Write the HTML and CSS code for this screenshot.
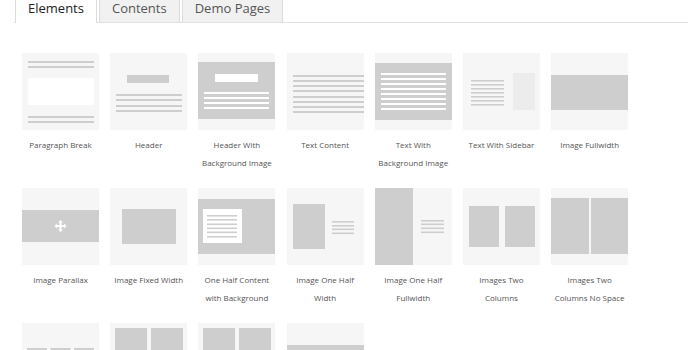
FILE: index.html
```html
<!DOCTYPE html>
<html>
	<head>
		<meta charset="UTF-8">
		<title>Elements</title>
		<link rel="stylesheet" href="styles.css">
	</head>
	<body>
		<div class="tabs">
			<a class="tab active">Elements</a>
			<a class="tab">Contents</a>
			<a class="tab">Demo Pages</a>
		</div>
		<ul class="grid">
			<li>
				<svg class="thumb" viewBox="0 0 77 77">
					<rect class="g" x="6" y="8" width="66" height="2"/>
					<rect class="g" x="6" y="13" width="66" height="2"/>
					<rect class="w" x="6" y="25" width="66" height="27"/>
					<rect class="g" x="6" y="63" width="66" height="2"/>
					<rect class="g" x="6" y="68" width="66" height="2"/>
				</svg>
				<p>Paragraph Break</p>
			</li>
			<li>
				<svg class="thumb" viewBox="0 0 77 77">
					<rect class="g" x="17" y="22" width="42" height="8"/>
					<rect class="g" x="6" y="41" width="66" height="2"/>
					<rect class="g" x="6" y="46" width="66" height="2"/>
					<rect class="g" x="6" y="52" width="66" height="2"/>
					<rect class="g" x="6" y="57" width="66" height="2"/>
				</svg>
				<p>Header</p>
			</li>
			<li>
				<svg class="thumb" viewBox="0 0 77 77">
					<rect class="g" x="0" y="9" width="77" height="57"/>
					<rect class="w" x="17" y="21" width="43" height="8"/>
					<rect class="w" x="6" y="39" width="65" height="2"/>
					<rect class="w" x="6" y="44" width="65" height="2"/>
					<rect class="w" x="6" y="49" width="65" height="2"/>
					<rect class="w" x="6" y="54" width="65" height="2"/>
				</svg>
				<p>Header With Background Image</p>
			</li>
			<li>
				<svg class="thumb" viewBox="0 0 77 77">
					<rect class="g" x="6" y="22" width="71" height="2"/>
					<rect class="g" x="6" y="27" width="71" height="2"/>
					<rect class="g" x="6" y="32" width="71" height="2"/>
					<rect class="g" x="6" y="37" width="71" height="2"/>
					<rect class="g" x="6" y="43" width="71" height="2"/>
					<rect class="g" x="6" y="48" width="71" height="2"/>
					<rect class="g" x="6" y="53" width="71" height="2"/>
					<rect class="g" x="6" y="58" width="71" height="2"/>
				</svg>
				<p>Text Content</p>
			</li>
			<li>
				<svg class="thumb" viewBox="0 0 77 77">
					<rect class="g" x="0" y="10" width="77" height="57"/>
					<rect class="w" x="6" y="20" width="65" height="2"/>
					<rect class="w" x="6" y="25" width="65" height="2"/>
					<rect class="w" x="6" y="30" width="65" height="2"/>
					<rect class="w" x="6" y="35" width="65" height="2"/>
					<rect class="w" x="6" y="40" width="65" height="2"/>
					<rect class="w" x="6" y="45" width="65" height="2"/>
					<rect class="w" x="6" y="50" width="65" height="2"/>
					<rect class="w" x="6" y="55" width="65" height="2"/>
				</svg>
				<p>Text With Background Image</p>
			</li>
			<li>
				<svg class="thumb" viewBox="0 0 77 77">
					<rect class="g" x="8" y="27" width="33" height="1.6"/>
					<rect class="g" x="8" y="31" width="33" height="1.6"/>
					<rect class="g" x="8" y="35" width="33" height="1.6"/>
					<rect class="g" x="8" y="39" width="33" height="1.6"/>
					<rect class="g" x="8" y="43" width="33" height="1.6"/>
					<rect class="g" x="8" y="47" width="33" height="1.6"/>
					<rect class="g" x="8" y="51" width="33" height="1.6"/>
					<rect class="s" x="50" y="20" width="22" height="37"/>
				</svg>
				<p>Text With Sidebar</p>
			</li>
			<li>
				<svg class="thumb" viewBox="0 0 77 77">
					<rect class="g" x="0" y="22" width="77" height="35"/>
				</svg>
				<p>Image Fullwidth</p>
			</li>

			<li>
				<svg class="thumb" viewBox="0 0 77 77">
					<rect class="g" x="0" y="22" width="77" height="32"/>
					<path class="w" d="M38.5 32 L41 34.5 H39.5 V37 H42 V35.5 L44.5 38 L42 40.5 V39 H39.5 V41.5 H41 L38.5 44 L36 41.5 H37.5 V39 H35 V40.5 L32.5 38 L35 35.5 V37 H37.5 V34.5 H36 Z"/>
				</svg>
				<p>Image Parallax</p>
			</li>
			<li>
				<svg class="thumb" viewBox="0 0 77 77">
					<rect class="g" x="12" y="21" width="54" height="35"/>
				</svg>
				<p>Image Fixed Width</p>
			</li>
			<li>
				<svg class="thumb" viewBox="0 0 77 77">
					<rect class="g" x="0" y="11" width="77" height="55"/>
					<rect class="w" x="5" y="21" width="39" height="34"/>
					<rect class="g" x="9" y="27" width="30" height="1.6"/>
					<rect class="g" x="9" y="31" width="30" height="1.6"/>
					<rect class="g" x="9" y="35.5" width="30" height="1.6"/>
					<rect class="g" x="9" y="39.5" width="30" height="1.6"/>
					<rect class="g" x="9" y="43.5" width="30" height="1.6"/>
					<rect class="g" x="9" y="48" width="30" height="1.6"/>
				</svg>
				<p>One Half Content with Background</p>
			</li>
			<li>
				<svg class="thumb" viewBox="0 0 77 77">
					<rect class="g" x="6" y="16" width="32" height="45"/>
					<rect class="g" x="45" y="33" width="22" height="1.6"/>
					<rect class="g" x="45" y="37" width="22" height="1.6"/>
					<rect class="g" x="45" y="40.5" width="22" height="1.6"/>
					<rect class="g" x="45" y="44.5" width="22" height="1.6"/>
				</svg>
				<p>Image One Half Width</p>
			</li>
			<li>
				<svg class="thumb" viewBox="0 0 77 77">
					<rect class="g" x="0" y="0" width="38" height="77"/>
					<rect class="g" x="46" y="32" width="23" height="1.6"/>
					<rect class="g" x="46" y="35.5" width="23" height="1.6"/>
					<rect class="g" x="46" y="39.5" width="23" height="1.6"/>
					<rect class="g" x="46" y="43.5" width="23" height="1.6"/>
				</svg>
				<p>Image One Half Fullwidth</p>
			</li>
			<li>
				<svg class="thumb" viewBox="0 0 77 77">
					<rect class="g" x="6" y="18" width="30" height="41"/>
					<rect class="g" x="42" y="18" width="30" height="41"/>
				</svg>
				<p>Images Two Columns</p>
			</li>
			<li>
				<svg class="thumb" viewBox="0 0 77 77">
					<rect class="g" x="0" y="10" width="38" height="56"/>
					<rect class="g" x="40" y="10" width="37" height="56"/>
				</svg>
				<p>Images Two Columns No Space</p>
			</li>

			<li>
				<svg class="thumb" viewBox="0 0 77 77">
					<rect class="g" x="5" y="25" width="20" height="27"/>
					<rect class="g" x="28.5" y="25" width="20" height="27"/>
					<rect class="g" x="52" y="25" width="20" height="27"/>
				</svg>
			</li>
			<li>
				<svg class="thumb" viewBox="0 0 77 77">
					<rect class="g" x="5" y="5" width="32" height="32"/>
					<rect class="g" x="41" y="5" width="32" height="32"/>
					<rect class="g" x="5" y="41" width="32" height="32"/>
					<rect class="g" x="41" y="41" width="32" height="32"/>
				</svg>
			</li>
			<li>
				<svg class="thumb" viewBox="0 0 77 77">
					<rect class="g" x="5" y="5" width="32" height="32"/>
					<rect class="g" x="41" y="5" width="32" height="32"/>
					<rect class="g" x="5" y="46" width="68" height="2"/>
					<rect class="g" x="5" y="51" width="68" height="2"/>
				</svg>
			</li>
			<li>
				<svg class="thumb" viewBox="0 0 77 77">
					<rect class="g" x="0" y="22" width="77" height="35"/>
				</svg>
			</li>
		</ul>
	</body>
</html>
```

FILE: styles.css
```css
body{
	margin: 0;
	background: #fff;
	font-family: "Open Sans", "Liberation Sans", sans-serif;
}
ul,li,p{
	margin: 0;
	padding: 0;
}
li{
	list-style: none;
}

.tabs{
	display: flex;
	margin: 0 12px 0 14px;
	padding-left: 1px;
	border-bottom: 1px solid #e2e2e2;
}
.tab{
	height: 22px;
	padding: 0 12px;
	margin-right: 2px;
	line-height: 17px;
	font-size: 13px;
	color: #555;
	background: #f1f1f1;
	border: 1px solid #dcdcdc;
	border-top: 0;
	border-bottom: 0;
}
.tab.active{
	color: #222;
	background: #fff;
	height: 23px;
	margin-bottom: -1px;
}

.grid{
	display: grid;
	grid-template-columns: repeat(7, 77px);
	column-gap: 11.2px;
	row-gap: 16px;
	margin: 30px 0 0 22px;
}
.thumb{
	display: block;
	width: 77px;
	height: 77px;
	background: #f6f6f6;
}
.g{
	fill: #cecece;
}
.w{
	fill: #fff;
}
.s{
	fill: #ececec;
}
.grid p{
	margin-top: 6px;
	min-height: 36px;
	font-size: 8px;
	line-height: 18px;
	color: #555;
	text-align: center;
}
```
